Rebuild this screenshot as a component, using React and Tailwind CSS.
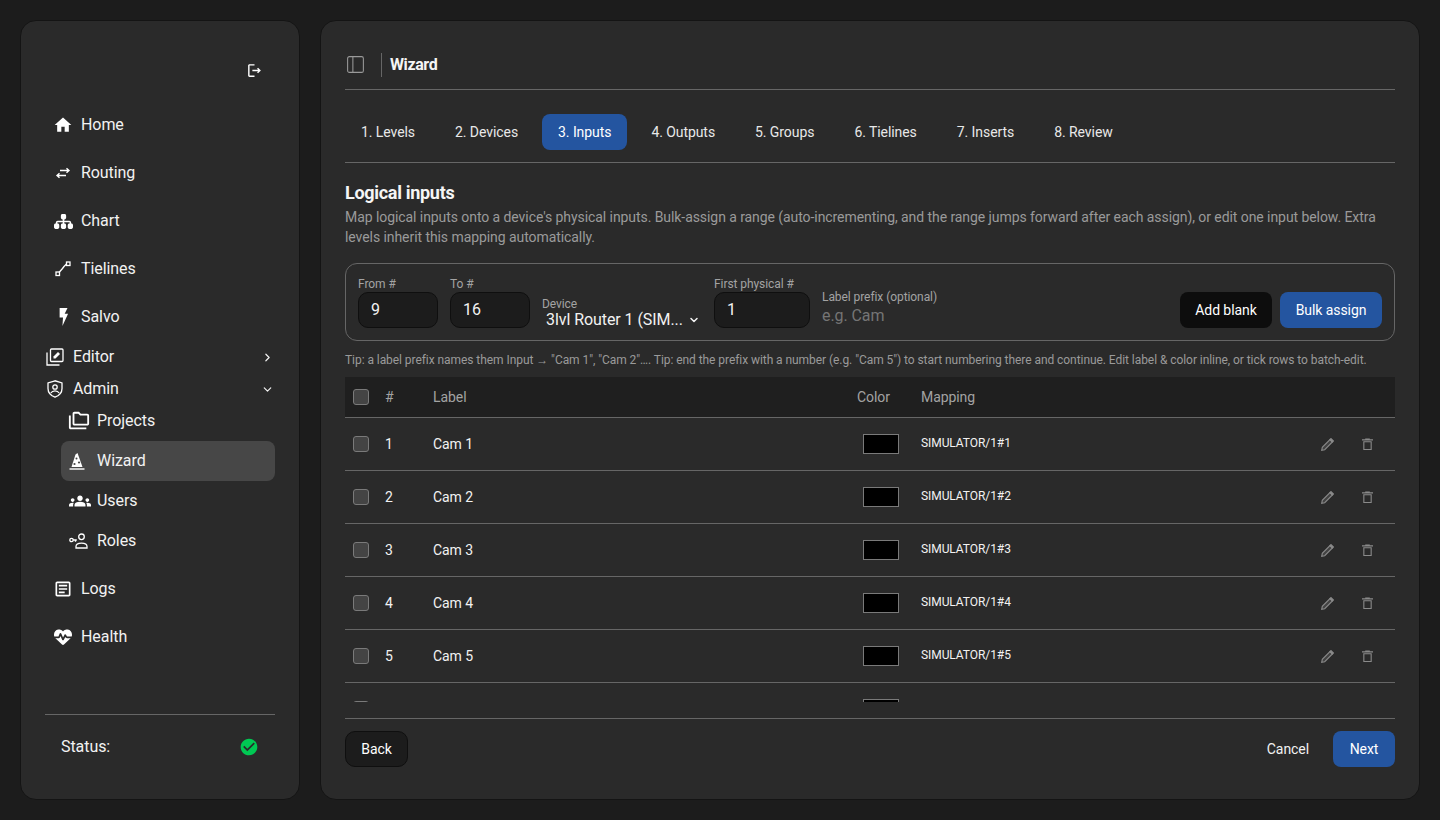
import { ChevronDown, ChevronRight, PanelLeft } from 'lucide-react';
import {
  MdHome, MdCheckCircle, MdOutlineArticle, MdOutlineFolderCopy, MdGroups, MdOutlineLogout,
} from 'react-icons/md';
import { FaHeartPulse, FaSitemap } from 'react-icons/fa6';

const RoutingIcon = (props) => (
  <svg viewBox="0 0 16 16" fill="none" stroke="currentColor" strokeWidth="1.4" {...props}>
    <path d="M5 5.500h9M11.500 3.200 14 5.500l-2.500 2.300" />
    <path d="M11 10.500H2M4.500 8.200 2 10.500l2.500 2.300" />
  </svg>
);

const TielineIcon = (props) => (
  <svg viewBox="0 0 16 16" fill="none" stroke="currentColor" strokeWidth="1.300" {...props}>
    <rect x="1" y="11" width="3.500" height="3.500" />
    <rect x="11.500" y="1" width="3.500" height="3.500" />
    <path d="M4 11.500 7.500 7.500 9 5.500 11.500 3" />
  </svg>
);

const BoltIcon = (props) => (
  <svg viewBox="0 0 16 16" fill="currentColor" {...props}>
    <path d="M5 0h7L9.500 5H12.500L7.500 16l.5-7.500H5z" />
  </svg>
);

const EditorIcon = (props) => (
  <svg viewBox="0 0 18 18" fill="none" stroke="currentColor" strokeWidth="1.300" {...props}>
    <rect x="4.500" y="1" width="12.500" height="12.500" rx="1" />
    <path d="M1 4.500V17h12.500" />
    <path d="M7.500 10.500v-2l4.500-4.500 2 2-4.500 4.500z" fill="currentColor" stroke="none" />
  </svg>
);

const AdminIcon = (props) => (
  <svg viewBox="0 0 18 18" fill="none" stroke="currentColor" strokeWidth="1.300" {...props}>
    <path d="M9 .8 2 3v5.500c0 4 3 7.200 7 8.700 4-1.500 7-4.700 7-8.700V3z" />
    <circle cx="9" cy="7" r="2.200" />
    <path d="M4.800 13c1-1.600 2.500-2.200 4.200-2.200s3.200.6 4.200 2.200" />
  </svg>
);

const RolesIcon = (props) => (
  <svg viewBox="0 0 20 16" fill="none" stroke="currentColor" strokeWidth="1.300" {...props}>
    <circle cx="2.500" cy="7" r="1.700" />
    <path d="M4.200 7h3.600M6.500 7v1.800" />
    <circle cx="12.500" cy="3.800" r="2.800" />
    <path d="M7 15v-1.500c0-2 2.500-3.300 5.500-3.300s5.500 1.300 5.500 3.300V15z" />
  </svg>
);

const HatIcon = (props) => (
  <svg viewBox="0 0 16 17" {...props}>
    <path d="M8.500 0 13.500 14H2.500L6.500 1.500z" fill="currentColor" />
    <rect x="0.500" y="15.300" width="15" height="1.400" fill="currentColor" />
    <circle cx="7.500" cy="5.500" r="1" fill="#474747" />
    <circle cx="10" cy="9.500" r="1.100" fill="#474747" />
    <circle cx="5.500" cy="11" r="1.100" fill="#474747" />
  </svg>
);

const TrashIcon = (props) => (
  <svg viewBox="0 0 12 13" fill="none" stroke="currentColor" strokeWidth="1.200" {...props}>
    <path d="M2 3.500h8V12H2z" />
    <path d="M0 1.500h12M3.500.6h5" />
  </svg>
);

const PencilIcon = (props) => (
  <svg viewBox="0 0 13 13" fill="none" stroke="currentColor" strokeWidth="1.100" {...props}>
    <path d="M.7 12.300l.6-3L9 1.600l2.400 2.400-7.700 7.700z" fill="#7a7a7a" fillOpacity="0.3" />
    <path d="M10 .6l2.400 2.400-1 1L9 1.600z" fill="currentColor" />
  </svg>
);

const topItems = [
  { label: 'Home', icon: <MdHome className="h-[20px] w-[20px]" /> },
  { label: 'Routing', icon: <RoutingIcon className="h-[16px] w-[16px]" /> },
  { label: 'Chart', icon: <FaSitemap className="h-[19px] w-[19px]" /> },
  { label: 'Tielines', icon: <TielineIcon className="h-[16px] w-[16px]" /> },
  { label: 'Salvo', icon: <BoltIcon className="h-[18px] w-[18px]" /> },
];

const subItems = [
  { label: 'Projects', icon: <MdOutlineFolderCopy className="h-[22px] w-[22px]" /> },
  { label: 'Wizard', active: true, icon: <HatIcon className="h-[17px] w-[16px]" /> },
  { label: 'Users', icon: <MdGroups className="h-[22px] w-[22px]" /> },
  { label: 'Roles', icon: <RolesIcon className="h-[16px] w-[20px]" /> },
];

const bottomItems = [
  { label: 'Logs', icon: <MdOutlineArticle className="h-[20px] w-[20px]" /> },
  { label: 'Health', icon: <FaHeartPulse className="h-[18px] w-[18px]" /> },
];

const tabs = ['1. Levels', '2. Devices', '3. Inputs', '4. Outputs', '5. Groups', '6. Tielines', '7. Inserts', '8. Review'];

const rows = [1, 2, 3, 4, 5, 6];

const NavItem = ({ label, icon }) => (
  <div className="flex h-[48px] items-center">
    <span className="flex w-[36px] justify-center text-white">{icon}</span>
    <span className="text-[16px] text-[#f2f2f2]">{label}</span>
  </div>
);

const Checkbox = () => (
  <span className="block h-[16px] w-[16px] rounded-[3px] border border-[#7a7a7a] bg-[#444444]" />
);

const Field = ({ label, value, className }) => (
  <div className={className}>
    <div className="text-[12px] leading-[15px] text-[#a3a3a3]">{label}</div>
    <div className="flex h-[36px] items-center rounded-[10px] border border-[#0f0f0f] bg-[#1c1c1c] pl-[12px] text-[16px] text-[#f2f2f2]">
      {value}
    </div>
  </div>
);

export default function App() {
  return (
    <div className="flex h-[820px] gap-[20px] bg-[#1c1c1c] p-[20px] font-['Roboto',sans-serif] tracking-[-0.07px]">
      {/* sidebar */}
      <aside className="flex w-[280px] shrink-0 flex-col rounded-[16px] border border-[#141414] bg-[#2a2a2a] px-[24px]">
        <div className="flex h-[80px] items-start justify-end pr-[12px] pt-[41px] text-white">
          <MdOutlineLogout className="h-[17px] w-[17px]" />
        </div>
        <nav className="flex-1">
          {topItems.map((item) => (
            <NavItem key={item.label} {...item} />
          ))}
          <div className="flex h-[32px] items-center text-[#f2f2f2]">
            <span className="flex w-[28px] pl-[1px] text-white">
              <EditorIcon className="h-[18px] w-[18px]" />
            </span>
            <span className="flex-1 text-[16px]">Editor</span>
            <ChevronRight className="mr-[1px] h-[13px] w-[13px]" strokeWidth={2.200} />
          </div>
          <div className="flex h-[32px] items-center text-[#f2f2f2]">
            <span className="flex w-[28px] pl-[1px] text-white">
              <AdminIcon className="h-[18px] w-[18px]" />
            </span>
            <span className="flex-1 text-[16px]">Admin</span>
            <ChevronDown className="mr-[1px] h-[13px] w-[13px]" strokeWidth={2.200} />
          </div>
          <div className="ml-[16px]">
            <div className="flex h-[32px] items-center pl-[7px]">
              <span className="flex w-[29px] text-white">{subItems[0].icon}</span>
              <span className="text-[16px] text-[#f2f2f2]">Projects</span>
            </div>
            {subItems.slice(1).map((item) => (
              <div
                key={item.label}
                className={`flex h-[40px] items-center rounded-[8px] pl-[8px] ${item.active ? 'mt-[4px] bg-[#474747]' : ''}`}
              >
                <span className="flex w-[28px] justify-start text-white">{item.icon}</span>
                <span className="text-[16px] text-[#f2f2f2]">{item.label}</span>
              </div>
            ))}
          </div>
          <div className="mt-[4px]">
            {bottomItems.map((item) => (
              <NavItem key={item.label} {...item} />
            ))}
          </div>
        </nav>
        <div className="mb-[20px] flex h-[65px] items-center justify-between border-t border-[#666666] pl-[16px] pr-[16px] text-[16px] text-[#f2f2f2]">
          <span>Status:</span>
          <MdCheckCircle className="h-[20px] w-[20px] text-[#00c853]" />
        </div>
      </aside>

      {/* main panel */}
      <main className="flex min-w-0 flex-1 flex-col rounded-[16px] border border-[#141414] bg-[#2a2a2a] px-[24px] pb-[32px] pt-[19px]">
        <header className="flex h-[50px] shrink-0 items-center border-b border-[#666666]">
          <PanelLeft className="h-[21px] w-[21px] text-[#9a9a9a]" strokeWidth={1.200} />
          <span className="ml-[15px] h-[24px] w-px bg-[#666666]" />
          <span className="ml-[8px] text-[16px] font-bold tracking-[-0.4px] text-[#f5f5f5]">Wizard</span>
        </header>

        <div className="flex h-[73px] shrink-0 items-center gap-[8px] border-b border-[#666666] pt-[12px]">
          {tabs.map((tab) => (
            <div
              key={tab}
              className={`flex h-[36px] items-center rounded-[8px] px-[16px] text-[14px] ${tab === '3. Inputs' ? 'bg-[#2455a0] text-white' : 'text-[#e8e8e8]'}`}
            >
              {tab}
            </div>
          ))}
        </div>

        <h1 className="mt-[18px] shrink-0 text-[18px] font-bold leading-[24px] tracking-[-0.3px] text-[#f5f5f5]">Logical inputs</h1>
        <p className="mt-[2px] shrink-0 text-[14px] leading-[20px] text-[#9a9a9a]">
          Map logical inputs onto a device's physical inputs. Bulk-assign a range (auto-incrementing, and the range jumps forward after each assign), or edit one input below. Extra levels inherit this mapping automatically.
        </p>

        {/* bulk assign */}
        <div className="mt-[16px] flex h-[78px] shrink-0 items-end rounded-[12px] border border-[#666666] px-[12px] pb-[12px]">
          <Field label="From #" value="9" className="w-[80px]" />
          <Field label="To #" value="16" className="ml-[12px] w-[80px]" />
          <div className="-mb-[1px] ml-[12px] w-[160px]">
            <div className="text-[12px] leading-[14px] text-[#a3a3a3]">Device</div>
            <div className="flex h-[18px] items-center pl-[4px] text-[16px] leading-[18px] text-[#f2f2f2]">
              <span className="w-[140px] shrink-0 whitespace-nowrap">3lvl Router 1 (SIM...</span>
              <ChevronDown className="ml-[2px] h-[12px] w-[12px] shrink-0" strokeWidth={3} />
            </div>
          </div>
          <Field label="First physical #" value="1" className="ml-[12px] w-[96px]" />
          <div className="ml-[12px] flex-1 pb-[1px]">
            <div className="text-[12px] leading-[15px] text-[#a3a3a3]">Label prefix (optional)</div>
            <div className="text-[16px] leading-[22px] text-[#757575]">e.g. Cam</div>
          </div>
          <button className="flex h-[36px] w-[92px] items-center justify-center rounded-[8px] bg-[#0d0d0d] text-[14px] text-white">
            Add blank
          </button>
          <button className="ml-[8px] flex h-[36px] w-[102px] items-center justify-center rounded-[8px] bg-[#2455a0] text-[14px] text-white">
            Bulk assign
          </button>
        </div>

        <p className="mt-[11px] shrink-0 whitespace-nowrap text-[12px] leading-[16px] tracking-[-0.06px] text-[#9a9a9a]">
          Tip: a label prefix names them Input → "Cam 1", "Cam 2"…. Tip: end the prefix with a number (e.g. "Cam 5") to start numbering there and continue. Edit label &amp; color inline, or tick rows to batch-edit.
        </p>

        {/* table */}
        <div className="mt-[9px] min-h-0 flex-1 overflow-hidden">
          <div className="flex h-[41px] items-center border-b border-[#666666] bg-[#1f1f1f] pl-[8px] text-[14px] text-[#a3a3a3]">
            <span className="w-[32px]"><Checkbox /></span>
            <span className="w-[48px]">#</span>
            <span className="w-[424px]">Label</span>
            <span className="w-[64px]">Color</span>
            <span>Mapping</span>
          </div>
          {rows.map((n) => (
            <div key={n} className="flex h-[53px] items-center border-b border-[#666666] pl-[8px] pr-[22px] text-[14px] text-[#f2f2f2]">
              <span className="w-[32px]"><Checkbox /></span>
              <span className="w-[48px]">{n}</span>
              <span className="w-[424px]">Cam {n}</span>
              <span className="w-[64px] pl-[6px]">
                <span className="block h-[20px] w-[36px] border border-[#7a7a7a] bg-black" />
              </span>
              <span className="mb-[2px] flex-1 text-[12px]">SIMULATOR/1#{n}</span>
              <PencilIcon className="h-[13px] w-[13px] text-[#8a8a8a]" />
              <TrashIcon className="ml-[28px] h-[13px] w-[11px] text-[#8a8a8a]" />
            </div>
          ))}
        </div>

        {/* footer */}
        <div className="mt-[16px] flex h-[49px] shrink-0 items-end border-t border-[#666666]">
          <button className="flex h-[36px] w-[63px] items-center justify-center rounded-[10px] border border-[#0f0f0f] bg-[#1c1c1c] text-[14px] text-white">
            Back
          </button>
          <span className="ml-auto mr-[24px] flex h-[36px] items-center text-[14px] text-[#f2f2f2]">Cancel</span>
          <button className="flex h-[36px] w-[62px] items-center justify-center rounded-[8px] bg-[#2455a0] text-[14px] text-white">
            Next
          </button>
        </div>
      </main>
    </div>
  );
}
